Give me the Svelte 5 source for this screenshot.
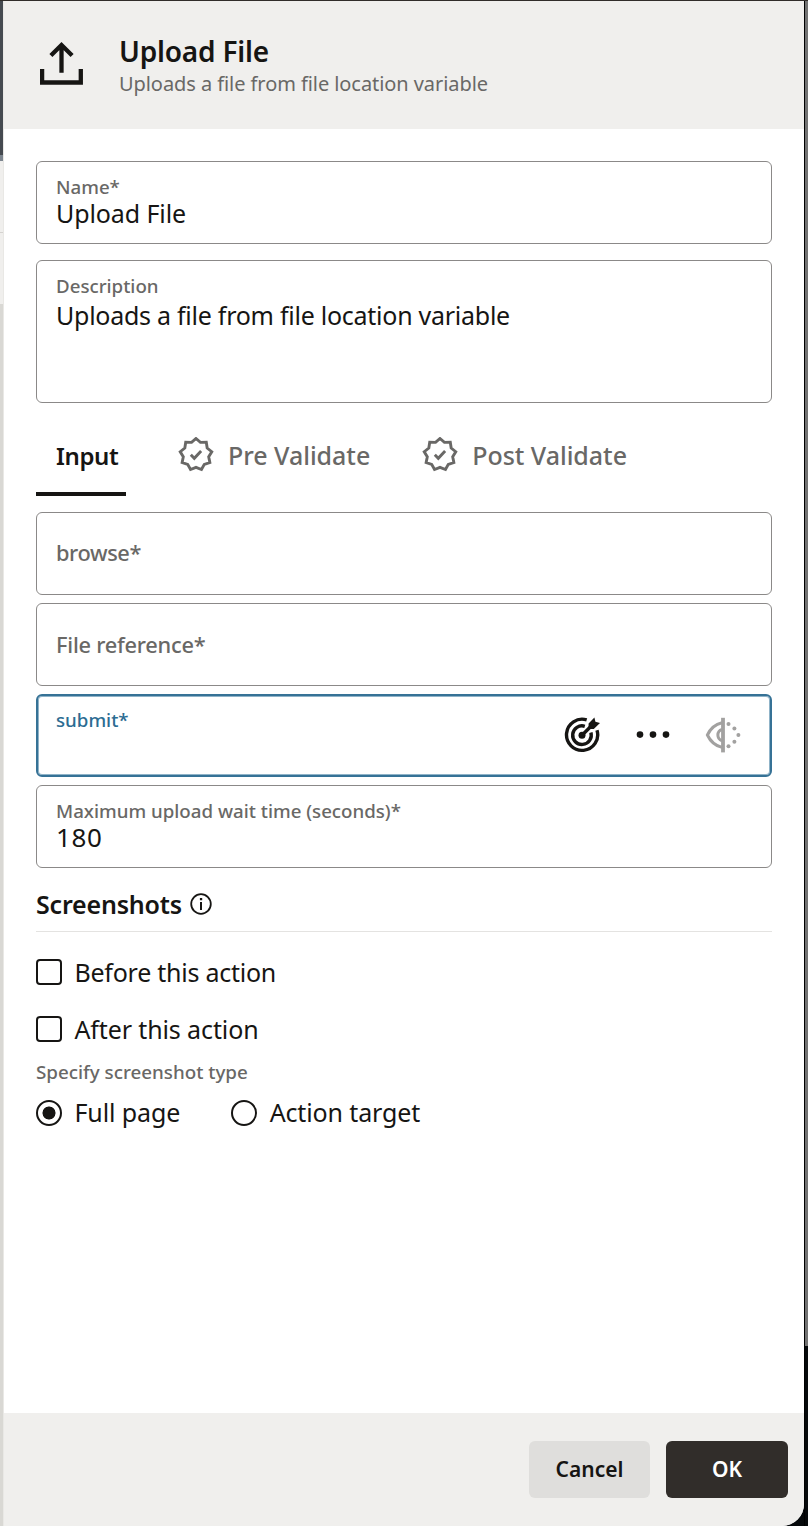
<script lang="ts">
	let name = 'Upload File';
	let description = 'Uploads a file from file location variable';
	let wait_time = '180';
	let screenshot_type = 'full';
	let before = false;
	let after = false;

	const validate_tabs = ['Pre Validate', 'Post Validate'];

	// nine pointed badge outline, alternating outer and inner radius
	const badge = Array.from({ length: 18 }, (_, i) => {
		const radius = i % 2 ? 12.9 : 16;
		const angle = (i * Math.PI) / 9 - Math.PI / 2;
		return `${18 + radius * Math.cos(angle)},${17.5 + radius * Math.sin(angle)}`;
	}).join(' ');
</script>

<main>
	<div class="backdrop-left">
		<div class="masthead"></div>
		<div class="strip"></div>
		<div class="rest"></div>
	</div>

	<section class="drawer">
		<header>
			<svg class="upload" width="44" height="44" viewBox="0 0 44 44">
				<path d="M2.1 28v13.5h38.7V28M21.5 31.8V4M10.9 14.6 21.5 4l10.6 10.6" />
			</svg>
			<div>
				<h1>Upload File</h1>
				<p>Uploads a file from file location variable</p>
			</div>
		</header>

		<div class="content">
			<label class="field">
				<span class="label">Name*</span>
				<input bind:value={name} type="text" />
			</label>
			<label class="field description">
				<span class="label">Description</span>
				<textarea bind:value={description}></textarea>
			</label>

			<nav>
				<button class="tab active">Input</button>
				{#each validate_tabs as tab}
					<button class="tab">
						<svg width="36" height="36" viewBox="0 0 36 36">
							<polygon points={badge} />
							<path d="m12.8 17.8 3.5 3.5 6.8-7.2" />
						</svg>
						<span>{tab}</span>
					</button>
				{/each}
			</nav>

			<div class="inputs">
				<div class="field empty">browse*</div>
				<div class="field empty reference">File reference*</div>
				<div class="field focused">
					<span class="label">submit*</span>
					<div class="actions">
						<svg width="36" height="36" viewBox="0 0 36 36" fill="none" stroke="#161513" stroke-width="3.4">
							<path d="M22.7 2.9A15.6 15.6 0 1 0 33 13.2" />
							<path d="M20.8 9.3A9.3 9.3 0 1 0 26.9 15.5" />
							<path d="m18 18.2 11-11" />
							<circle cx="18" cy="18.2" r="3.5" fill="#161513" stroke="none" />
							<path d="M24.6 6.4 30.4.4l1 4.3 4.6 1.2-6.2 6.2-5.3-.2z" fill="#161513" stroke="none" />
						</svg>
						<svg width="36" height="36" viewBox="0 0 36 36" fill="#161513">
							<circle cx="5" cy="17.6" r="3.3" />
							<circle cx="18" cy="17.6" r="3.3" />
							<circle cx="31" cy="17.6" r="3.3" />
						</svg>
						<svg width="36" height="36" viewBox="0 0 36 36" fill="none" stroke="#a2a1a0" stroke-width="3">
							<path d="M18 .8v34.6" stroke-width="3.8" />
							<path d="M17 5.8C10.5 7.3 5.3 11.8 2.4 18 5.3 24.2 10.5 28.8 17 30.4" />
							<path d="M17 12.4a6 6 0 0 0 0 11.4" />
							<g fill="#a2a1a0" stroke="none">
								<circle cx="23.5" cy="7" r="2" />
								<circle cx="29.4" cy="11.4" r="2" />
								<circle cx="33.4" cy="18" r="2" />
								<circle cx="29.4" cy="24.7" r="2" />
								<circle cx="23.5" cy="29.2" r="2" />
							</g>
						</svg>
					</div>
				</div>
				<label class="field">
					<span class="label">Maximum upload wait time (seconds)*</span>
					<input bind:value={wait_time} class="number" type="text" />
				</label>
			</div>

			<h2>
				Screenshots
				<svg width="22" height="22" viewBox="0 0 22 22">
					<circle cx="11" cy="11" r="9.8" fill="none" stroke="#161513" stroke-width="1.8" />
					<path d="M10 9h2v8h-2zM9.9 5h2.3v2.3H9.9z" fill="#161513" />
				</svg>
			</h2>

			<label class="option">
				<input bind:checked={before} type="checkbox" />
				<span class="before">Before this action</span>
			</label>
			<label class="option second">
				<input bind:checked={after} type="checkbox" />
				<span>After this action</span>
			</label>

			<p class="hint">Specify screenshot type</p>
			<div class="radios">
				<label class="option">
					<input bind:group={screenshot_type} type="radio" value="full" />
					<span>Full page</span>
				</label>
				<label class="option">
					<input bind:group={screenshot_type} type="radio" value="target" />
					<span>Action target</span>
				</label>
			</div>
		</div>

		<footer>
			<button class="cancel">Cancel</button>
			<button class="ok">OK</button>
		</footer>
	</section>

	<div class="backdrop-right"></div>
</main>

<style>
	:global(body) {
		background: #06090b;
	}
	main {
		display: grid;
		grid-template-columns: 4px 800px 4px;
		height: 1526px;
		overflow: hidden;
		box-sizing: border-box;
		border-top: 1px solid #312d2a;
		font-family: 'Noto Sans', 'Open Sans', sans-serif;
		color: #161513;
	}
	.backdrop-left {
		display: flex;
		flex-direction: column;
		border-right: 1px solid #e9e8e5;
		background: #d9d8d4;
	}
	.masthead {
		height: 154px;
		background: #454a50;
		border-bottom: 6px solid #7c858e;
	}
	.strip {
		height: 71px;
		background: #f0efed;
		border-bottom: 1px solid #d5d3d0;
	}
	.rest {
		height: 71px;
		background: #f0efed;
	}
	.backdrop-right {
		border-left: 1px solid #000;
		background: linear-gradient(#727272 1345px, #06090b 1345px);
	}
	.drawer {
		display: flex;
		flex-direction: column;
		background: #fff;
		border-radius: 0 0 22px 0;
		overflow: hidden;
	}
	header {
		display: flex;
		gap: 35px;
		height: 128px;
		box-sizing: border-box;
		padding: 32px 36px 0;
		background: #f0efed;
	}
	.upload {
		margin-top: 8px;
		fill: none;
		stroke: #161513;
		stroke-width: 4.3;
	}
	h1 {
		margin: 0 0 1px;
		font-size: 28px;
		line-height: 36px;
		font-weight: 600;
		letter-spacing: -0.2px;
	}
	header p {
		margin: 0;
		font-size: 20px;
		line-height: 28px;
		color: #696866;
		letter-spacing: -0.07px;
	}
	.content {
		flex: 1;
		padding: 32px 32px 0;
	}
	.field {
		display: block;
		height: 83px;
		box-sizing: border-box;
		border: 1px solid #8b8988;
		border-radius: 6px;
		padding: 12px 19px 0;
	}
	.label {
		display: block;
		font-size: 18.7px;
		line-height: 25px;
		font-weight: 500;
		color: #696866;
	}
	input[type='text'],
	textarea {
		display: block;
		width: 100%;
		padding: 0;
		border: 0;
		outline: 0;
		background: none;
		resize: none;
		font: 25px/26px 'Noto Sans', 'Open Sans', sans-serif;
		letter-spacing: -0.1px;
		color: #161513;
	}
	input[type='text'] {
		height: 36px;
		margin: -4px 0 0;
	}
	input.number {
		font-size: 26px;
		letter-spacing: 0.6px;
	}
	.description {
		height: 143px;
		margin-top: 16px;
	}
	textarea {
		height: 90px;
		margin-top: 4px;
		letter-spacing: -0.26px;
	}
	nav {
		display: flex;
		gap: 52px;
		height: 93px;
	}
	.tab {
		display: flex;
		align-items: center;
		gap: 14px;
		padding: 11px 0 0;
		border: 0;
		background: none;
		font: 500 25px/32px 'Noto Sans', 'Open Sans', sans-serif;
		letter-spacing: -0.03px;
		color: #696866;
	}
	.tab.active {
		width: 90px;
		padding: 16px 0 0 20px;
		border-bottom: 4px solid #161513;
		font-size: 24px;
		font-weight: 600;
		letter-spacing: -0.4px;
		color: #161513;
	}
	.tab svg {
		fill: none;
		stroke: #696866;
		stroke-width: 2.9;
	}
	.inputs {
		display: grid;
		gap: 8px;
		margin-top: 16px;
	}
	.empty {
		padding-top: 24px;
		font-size: 21.8px;
		line-height: 31px;
		font-weight: 500;
		letter-spacing: -0.4px;
		color: #696866;
	}
	.reference {
		padding-top: 25px;
		letter-spacing: -0.25px;
	}
	.focused {
		display: flex;
		justify-content: space-between;
		border: 2px solid #367296;
		box-shadow: inset 0 0 0 1px #8fb3c8;
		padding: 11px 29px 0 18px;
	}
	.focused .label {
		color: #2c6c92;
	}
	.actions {
		display: flex;
		gap: 34.5px;
		padding-top: 10px;
	}
	h2 {
		display: flex;
		align-items: center;
		gap: 8px;
		height: 64px;
		margin: 0 0 27px;
		box-sizing: border-box;
		border-bottom: 1px solid #e4e3e1;
		font-size: 25px;
		line-height: 34px;
		font-weight: 600;
		letter-spacing: -0.2px;
		padding-top: 8px;
	}
	.option {
		display: flex;
		align-items: center;
		gap: 12.5px;
		height: 26px;
		font-size: 25px;
		line-height: 26px;
		letter-spacing: -0.12px;
	}
	.before {
		letter-spacing: -0.25px;
	}
	.option input {
		appearance: none;
		width: 26px;
		height: 26px;
		margin: 0;
		box-sizing: border-box;
		border: 2px solid #161513;
		border-radius: 4px;
	}
	.option input[type='radio'] {
		border-radius: 50%;
	}
	.option input[type='radio']:checked {
		background: radial-gradient(circle, #161513 6.2px, transparent 6.8px);
	}
	.second {
		margin-top: 31px;
	}
	.hint {
		margin: 17px 0 15px;
		font-size: 18.8px;
		line-height: 26px;
		font-weight: 500;
		color: #696866;
	}
	.radios {
		display: flex;
		gap: 51px;
	}
	.radios span {
		margin-top: -2px;
	}
	footer {
		display: flex;
		justify-content: flex-end;
		gap: 16px;
		height: 113px;
		box-sizing: border-box;
		padding: 28px 16px;
		background: #f0efed;
	}
	footer button {
		width: 121px;
		height: 57px;
		padding: 0 0 2px;
		border: 0;
		border-radius: 6px;
		font: 600 21px/28px 'Noto Sans', 'Open Sans', sans-serif;
		color: #161513;
	}
	.cancel {
		background: #dfdedc;
	}
	footer .ok {
		width: 122px;
		background: #312d2a;
		color: #fff;
	}
</style>
